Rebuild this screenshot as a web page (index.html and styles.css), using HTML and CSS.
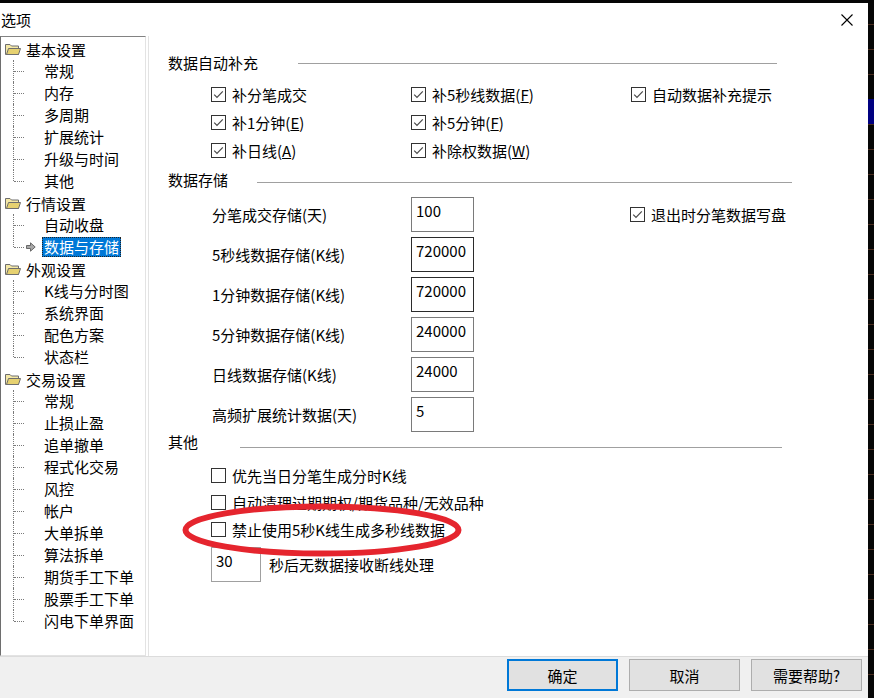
FILE: index.html
```html
<!DOCTYPE html>
<html lang="zh-CN">
<head>
<meta charset="utf-8">
<title>选项</title>
<link rel="stylesheet" href="styles.css">
</head>
<body>
<div class="screen">
  <div class="topstrip"></div>
  <div class="dialog">
    <div class="titlebar">
      <span class="title">选项</span>
      <svg class="close" width="12" height="12" viewBox="0 0 12 12"><path d="M0.5 0.5 L11.5 11.5 M11.5 0.5 L0.5 11.5" stroke="#000" stroke-width="1.1" fill="none"/></svg>
    </div>
    <div class="body">
      <div class="tree">
        <div class="group">
          <div class="node"><svg class="folder" width="16" height="12" viewBox="0 0 16 12"><path d="M0.5 1.5 H5 L6.5 3 H13.5 V11.5 H0.5 Z" fill="#f4e8a6" stroke="#6e6e6e"/><path d="M1.5 11.5 L3.5 5.5 H15.5 L13.5 11.5 Z" fill="#e6d170" stroke="#6e6e6e"/></svg><span>基本设置</span></div>
          <ul class="kids">
            <li><i class="slot"></i><span class="lbl">常规</span></li>
            <li><i class="slot"></i><span class="lbl">内存</span></li>
            <li><i class="slot"></i><span class="lbl">多周期</span></li>
            <li><i class="slot"></i><span class="lbl">扩展统计</span></li>
            <li><i class="slot"></i><span class="lbl">升级与时间</span></li>
            <li><i class="slot"></i><span class="lbl">其他</span></li>
          </ul>
        </div>
        <div class="group">
          <div class="node"><svg class="folder" width="16" height="12" viewBox="0 0 16 12"><path d="M0.5 1.5 H5 L6.5 3 H13.5 V11.5 H0.5 Z" fill="#f4e8a6" stroke="#6e6e6e"/><path d="M1.5 11.5 L3.5 5.5 H15.5 L13.5 11.5 Z" fill="#e6d170" stroke="#6e6e6e"/></svg><span>行情设置</span></div>
          <ul class="kids">
            <li><i class="slot"></i><span class="lbl">自动收盘</span></li>
            <li><i class="slot"><svg width="10" height="10" viewBox="0 0 10 10"><path d="M0.5 3.5 H4.5 V0.8 L9.2 5 L4.5 9.2 V6.5 H0.5 Z" fill="#a8a8a8" stroke="#5c5c5c" stroke-width="0.9"/></svg></i><span class="lbl sel">数据与存储</span></li>
          </ul>
        </div>
        <div class="group">
          <div class="node"><svg class="folder" width="16" height="12" viewBox="0 0 16 12"><path d="M0.5 1.5 H5 L6.5 3 H13.5 V11.5 H0.5 Z" fill="#f4e8a6" stroke="#6e6e6e"/><path d="M1.5 11.5 L3.5 5.5 H15.5 L13.5 11.5 Z" fill="#e6d170" stroke="#6e6e6e"/></svg><span>外观设置</span></div>
          <ul class="kids">
            <li><i class="slot"></i><span class="lbl">K线与分时图</span></li>
            <li><i class="slot"></i><span class="lbl">系统界面</span></li>
            <li><i class="slot"></i><span class="lbl">配色方案</span></li>
            <li><i class="slot"></i><span class="lbl">状态栏</span></li>
          </ul>
        </div>
        <div class="group">
          <div class="node"><svg class="folder" width="16" height="12" viewBox="0 0 16 12"><path d="M0.5 1.5 H5 L6.5 3 H13.5 V11.5 H0.5 Z" fill="#f4e8a6" stroke="#6e6e6e"/><path d="M1.5 11.5 L3.5 5.5 H15.5 L13.5 11.5 Z" fill="#e6d170" stroke="#6e6e6e"/></svg><span>交易设置</span></div>
          <ul class="kids">
            <li><i class="slot"></i><span class="lbl">常规</span></li>
            <li><i class="slot"></i><span class="lbl">止损止盈</span></li>
            <li><i class="slot"></i><span class="lbl">追单撤单</span></li>
            <li><i class="slot"></i><span class="lbl">程式化交易</span></li>
            <li><i class="slot"></i><span class="lbl">风控</span></li>
            <li><i class="slot"></i><span class="lbl">帐户</span></li>
            <li><i class="slot"></i><span class="lbl">大单拆单</span></li>
            <li><i class="slot"></i><span class="lbl">算法拆单</span></li>
            <li><i class="slot"></i><span class="lbl">期货手工下单</span></li>
            <li><i class="slot"></i><span class="lbl">股票手工下单</span></li>
            <li><i class="slot"></i><span class="lbl">闪电下单界面</span></li>
          </ul>
        </div>
      </div>

      <div class="panel">
        <div class="sec-head h1"><span>数据自动补充</span><i class="rule"></i></div>
        <div class="cb-grid">
          <label class="cb"><i class="box on"><svg width="13" height="13" viewBox="0 0 13 13"><path d="M2.2 6.6 L5 9.4 L10.8 3.4" stroke="#4a4a4a" stroke-width="1.2" fill="none"/></svg></i>补分笔成交</label>
          <label class="cb"><i class="box on"><svg width="13" height="13" viewBox="0 0 13 13"><path d="M2.2 6.6 L5 9.4 L10.8 3.4" stroke="#4a4a4a" stroke-width="1.2" fill="none"/></svg></i>补5秒线数据(<u>F</u>)</label>
          <label class="cb"><i class="box on"><svg width="13" height="13" viewBox="0 0 13 13"><path d="M2.2 6.6 L5 9.4 L10.8 3.4" stroke="#4a4a4a" stroke-width="1.2" fill="none"/></svg></i>自动数据补充提示</label>
          <label class="cb"><i class="box on"><svg width="13" height="13" viewBox="0 0 13 13"><path d="M2.2 6.6 L5 9.4 L10.8 3.4" stroke="#4a4a4a" stroke-width="1.2" fill="none"/></svg></i>补1分钟(<u>E</u>)</label>
          <label class="cb"><i class="box on"><svg width="13" height="13" viewBox="0 0 13 13"><path d="M2.2 6.6 L5 9.4 L10.8 3.4" stroke="#4a4a4a" stroke-width="1.2" fill="none"/></svg></i>补5分钟(<u>F</u>)</label>
          <span></span>
          <label class="cb"><i class="box on"><svg width="13" height="13" viewBox="0 0 13 13"><path d="M2.2 6.6 L5 9.4 L10.8 3.4" stroke="#4a4a4a" stroke-width="1.2" fill="none"/></svg></i>补日线(<u>A</u>)</label>
          <label class="cb"><i class="box on"><svg width="13" height="13" viewBox="0 0 13 13"><path d="M2.2 6.6 L5 9.4 L10.8 3.4" stroke="#4a4a4a" stroke-width="1.2" fill="none"/></svg></i>补除权数据(<u>W</u>)</label>
          <span></span>
        </div>

        <div class="sec-head h2"><span>数据存储</span><i class="rule"></i></div>
        <div class="store">
          <span class="slabel">分笔成交存储(天)</span><div class="num">100</div>
          <label class="cb extra"><i class="box on"><svg width="13" height="13" viewBox="0 0 13 13"><path d="M2.2 6.6 L5 9.4 L10.8 3.4" stroke="#4a4a4a" stroke-width="1.2" fill="none"/></svg></i>退出时分笔数据写盘</label>
          <span class="slabel">5秒线数据存储(K线)</span><div class="num dark">720000</div><span></span>
          <span class="slabel">1分钟数据存储(K线)</span><div class="num dark">720000</div><span></span>
          <span class="slabel">5分钟数据存储(K线)</span><div class="num">240000</div><span></span>
          <span class="slabel">日线数据存储(K线)</span><div class="num">24000</div><span></span>
          <span class="slabel">高频扩展统计数据(天)</span><div class="num">5</div><span></span>
        </div>

        <div class="sec-head h3"><span>其他</span><i class="rule"></i></div>
        <div class="others">
          <label class="cb row"><i class="box"></i>优先当日分笔生成分时K线</label>
          <label class="cb row"><i class="box"></i>自动清理过期期权/期货品种/无效品种</label>
          <label class="cb row"><i class="box"></i>禁止使用5秒K线生成多秒线数据</label>
          <div class="timeout"><div class="num small">30</div><span class="tlabel">秒后无数据接收断线处理</span></div>
        </div>

        <svg class="mark" width="280" height="54" viewBox="0 0 280 54"><ellipse cx="140" cy="27" rx="136.5" ry="23.5" fill="none" stroke="#e5252e" stroke-width="6"/></svg>
      </div>
    </div>
    <div class="footer">
      <button class="btn default">确定</button>
      <button class="btn">取消</button>
      <button class="btn">需要帮助?</button>
    </div>
  </div>
  <div class="sidestrip"><div class="navy"></div></div>
</div>
</body>
</html>
```

FILE: styles.css
```css
html, body {
  margin: 0;
  padding: 0;
}
body {
  background: #000;
  font-family: "Noto Sans CJK SC", "Microsoft YaHei", sans-serif;
  font-size: 15px;
  color: #000;
  overflow: hidden;
}
.screen {
  display: grid;
  grid-template-columns: 868px 6px;
  grid-template-rows: 3px 695px;
  width: 874px;
  height: 698px;
}
.topstrip {
  grid-column: 1 / 3;
  background: #050505;
}
.sidestrip {
  background-color: #060606;
  background-image: repeating-linear-gradient(to bottom, transparent 0 21px, #4a2c1e 21px 22px, transparent 22px 25px);
}
.navy {
  margin-top: 96px;
  height: 25px;
  background: #000080;
}
.dialog {
  background: #fff;
  display: flex;
  flex-direction: column;
}
.titlebar {
  height: 33px;
  display: flex;
  align-items: center;
  justify-content: space-between;
  padding-left: 1px;
  padding-right: 15px;
}
.title {
  font-size: 15px;
  line-height: 20px;
  margin-top: 0px;
}
.close {
  display: block;
  margin-top: 0px;
}
.body {
  height: 620px;
  display: flex;
}

/* tree */
.tree {
  box-sizing: border-box;
  width: 146px;
  height: 620px;
  border-top: 1px solid #828282;
  border-left: 1px solid #6e6e6e;
  border-right: 1px solid #e3e3e3;
  border-bottom: 1px solid #e3e3e3;
  padding-top: 1px;
  background: #fff;
  font-size: 15px;
}
.node {
  height: 22px;
  display: flex;
  align-items: center;
  padding-left: 4px;
}
.folder {
  display: block;
  margin-right: 5px;
}
.kids {
  list-style: none;
  margin: 0;
  padding: 0;
}
.kids li {
  position: relative;
  height: 22px;
  display: flex;
  align-items: center;
  padding-left: 25px;
}
.kids li::before {
  content: "";
  position: absolute;
  left: 12px;
  top: 0;
  bottom: 0;
  border-left: 1px dotted #7a7a7a;
}
.kids li:last-child::before {
  bottom: 11px;
}
.kids li::after {
  content: "";
  position: absolute;
  left: 13px;
  top: 11px;
  width: 10px;
  border-top: 1px dotted #7a7a7a;
}
.slot {
  width: 16px;
  height: 10px;
  display: flex;
  align-items: center;
}
.slot svg {
  display: block;
}
.lbl {
  padding: 0 2px;
  height: 20px;
  line-height: 20px;
  white-space: nowrap;
}
.lbl.sel {
  background: #0078d7;
  color: #fff;
  outline: 1px dotted #222;
  outline-offset: -1px;
}

/* panel */
.panel {
  position: relative;
  flex: 1;
  margin-left: 2px;
  border-left: 1px solid #e3e3e3;
  padding-left: 19px;
  background: #fff;
}
.sec-head {
  height: 22px;
  display: flex;
  align-items: center;
  line-height: 22px;
}
.rule {
  display: block;
  align-self: flex-start;
  height: 1px;
  background: #a0a0a0;
}
.h1 { margin-top: 16px; }
.h1 .rule { margin-left: 40px; width: 479px; margin-top: 11px; }
.h2 { margin-top: 5px; }
.h2 .rule { margin-left: 29px; width: 535px; margin-top: 13px; }
.h3 { margin-top: -1px; }
.h3 .rule { margin-left: 42px; width: 542px; margin-top: 16px; }

.cb {
  display: inline-flex;
  align-items: center;
  white-space: nowrap;
}
.box {
  box-sizing: border-box;
  width: 15px;
  height: 15px;
  border: 1px solid #333;
  background: #fff;
  margin-right: 6px;
  display: flex;
  align-items: center;
  justify-content: center;
  flex: none;
}
.box svg { display: block; }

.cb-grid {
  margin-top: 6px;
  margin-left: 43px;
  display: grid;
  grid-template-columns: 200px 220px auto;
  grid-auto-rows: 28px;
  align-items: center;
}

.store {
  margin-top: 6px;
  margin-left: 44px;
  display: grid;
  grid-template-columns: 199px 63px auto;
  grid-auto-rows: 35px;
  row-gap: 5px;
  align-items: center;
}
.slabel {
  white-space: nowrap;
}
.cb.extra {
  margin-left: 156px;
}
.num {
  box-sizing: border-box;
  height: 35px;
  border: 1px solid #7a7a7a;
  padding: 3px 4px;
  line-height: 20px;
  background: #fff;
}
.num.dark {
  border-color: #2b2b2b;
}
.num.small {
  width: 50px;
  border-color: #a0a0a0;
}

.others {
  margin-top: 9px;
  margin-left: 43px;
  display: flex;
  flex-direction: column;
  align-items: flex-start;
}
.cb.row {
  height: 27px;
}
.timeout {
  margin-top: 4px;
  display: flex;
  align-items: center;
}
.tlabel {
  margin-left: 8px;
}

.mark {
  position: absolute;
  left: 33px;
  top: 467px;
  pointer-events: none;
}

/* footer */
.footer {
  box-sizing: border-box;
  height: 42px;
  border-top: 1px solid #dcdcdc;
  background: #f0f0f0;
  display: flex;
  justify-content: flex-end;
  align-items: flex-start;
  padding-top: 2px;
  padding-right: 6px;
}
.btn {
  box-sizing: border-box;
  width: 111px;
  height: 32px;
  margin-left: 10px;
  background: #e1e1e1;
  border: 1px solid #adadad;
  font-family: "Noto Sans CJK SC", "Microsoft YaHei", sans-serif;
  font-size: 15px;
  color: #000;
  padding: 0;
}
.btn.default {
  border: 2px solid #0078d7;
}
.btn + .btn.btn {
  margin-left: 11px;
}
.btn:last-child {
  margin-left: 10px;
}
```
